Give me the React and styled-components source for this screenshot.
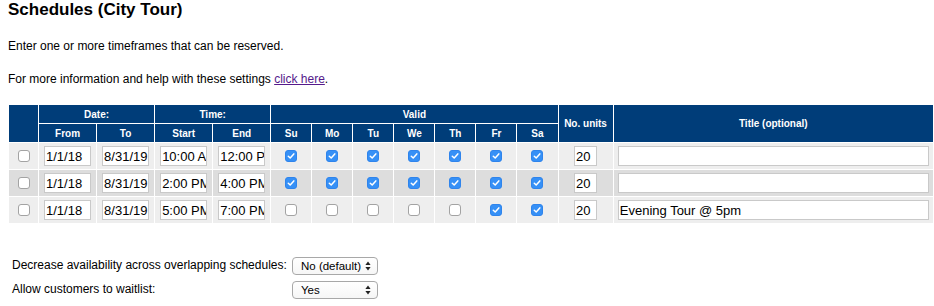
import React from "react";
import styled, { createGlobalStyle } from "styled-components";

const GlobalStyle = createGlobalStyle`
  body {
    margin: 0;
    background: #fff;
    color: #000;
    font-family: "Liberation Sans", Arial, Helvetica, sans-serif;
  }
`;

const Page = styled.div`
  padding: 0 0 0 8px;
`;

const Heading = styled.h2`
  margin: 0;
  font-size: 17px;
  line-height: 20px;
  font-weight: bold;
`;

const Note = styled.p`
  margin: 19px 0 0;
  font-size: 12px;
  line-height: 14px;
`;

const HelpLink = styled.a`
  color: #551a8b;
  text-decoration: underline;
`;

const ScheduleTable = styled.table`
  margin-top: 18px;
  border-collapse: separate;
  border-spacing: 1px;
  table-layout: fixed;
  width: 926px;
  background: #fff;
`;

const HeadCell = styled.th`
  background: #003d79;
  color: #fff;
  font-size: 10px;
  font-weight: bold;
  height: 18px;
  padding: 0;
  text-align: center;
  vertical-align: middle;
`;

const Row = styled.tr`
  background: ${(p) => (p.$alt ? "#dddddd" : "#eeeeee")};
`;

const Cell = styled.td`
  height: 26px;
  padding: 0;
  text-align: center;
  vertical-align: middle;
  font-size: 0;
`;

const TextBox = styled.input`
  box-sizing: border-box;
  width: ${(p) => p.$w}px;
  height: 20px;
  margin: 0;
  padding: 0 0 0 1px;
  border: 1px solid #c9c9c9;
  background: #fff;
  font-family: "Liberation Sans", Arial, Helvetica, sans-serif;
  font-size: 13px;
  color: #000;
  vertical-align: middle;
  outline: none;
`;

const CheckBox = styled.span`
  display: inline-block;
  box-sizing: border-box;
  width: 12px;
  height: 12px;
  border-radius: 3px;
  border: 1px solid ${(p) => (p.$checked ? "#2f84ec" : "#a3a3a3")};
  background: ${(p) => (p.$checked ? "#3690f6" : "#fff")};
  vertical-align: middle;
  position: relative;

  svg {
    position: absolute;
    left: 0;
    top: 0;
  }
`;

const Settings = styled.div`
  margin-top: 33px;
  padding-left: 4px;
  display: grid;
  grid-template-columns: 280px auto;
  row-gap: 6px;
  align-items: center;
  justify-content: start;
`;

const SettingLabel = styled.span`
  font-size: 12px;
  line-height: 14px;
  margin-bottom: 3px;
`;

const SelectFrame = styled.span`
  display: inline-flex;
  align-items: center;
  box-sizing: border-box;
  width: 86px;
  height: 18px;
  border: 1px solid #a8a8a8;
  border-radius: 4px;
  background: linear-gradient(#ffffff, #f6f6f6);
  padding-right: 6px;

  select {
    appearance: none;
    flex: 1;
    min-width: 0;
    border: none;
    background: transparent;
    font-family: "Liberation Sans", Arial, Helvetica, sans-serif;
    font-size: 11.5px;
    color: #000;
    padding: 0 0 0 8px;
    margin: 0;
    outline: none;
  }
`;

const Check = ({ checked }) => (
  <CheckBox $checked={checked}>
    {checked && (
      <svg width="10" height="10" viewBox="0 0 10 10">
        <path
          d="M2.3 5.2 L4.2 7 L7.8 2.9"
          fill="none"
          stroke="#fff"
          strokeWidth="1.5"
          strokeLinecap="round"
          strokeLinejoin="round"
        />
      </svg>
    )}
  </CheckBox>
);

const Select = ({ value, options }) => (
  <SelectFrame>
    <select defaultValue={value}>
      {options.map((o) => (
        <option key={o}>{o}</option>
      ))}
    </select>
    <svg width="6" height="10" viewBox="0 0 6 10">
      <path d="M3 0.5 L5.6 4 L0.4 4 Z" fill="#222" />
      <path d="M3 9.5 L5.6 6 L0.4 6 Z" fill="#222" />
    </svg>
  </SelectFrame>
);

const days = ["Su", "Mo", "Tu", "We", "Th", "Fr", "Sa"];
const colWidths = [29, 57, 57, 57, 57, 40, 40, 40, 40, 40, 40, 40, 54, 319];

const schedules = [
  { from: "1/1/18", to: "8/31/19", start: "10:00 AM", end: "12:00 PM", days: [1, 1, 1, 1, 1, 1, 1], units: "20", title: "" },
  { from: "1/1/18", to: "8/31/19", start: "2:00 PM", end: "4:00 PM", days: [1, 1, 1, 1, 1, 1, 1], units: "20", title: "" },
  { from: "1/1/18", to: "8/31/19", start: "5:00 PM", end: "7:00 PM", days: [0, 0, 0, 0, 0, 1, 1], units: "20", title: "Evening Tour @ 5pm" },
];

export default function App() {
  return (
    <Page>
      <GlobalStyle />
      <Heading>Schedules (City Tour)</Heading>
      <Note>Enter one or more timeframes that can be reserved.</Note>
      <Note>
        For more information and help with these settings{" "}
        <HelpLink href="#help">click here</HelpLink>.
      </Note>

      <ScheduleTable>
        <colgroup>
          {colWidths.map((w, i) => (
            <col key={i} style={{ width: w }} />
          ))}
        </colgroup>
        <thead>
          <tr>
            <HeadCell rowSpan={2}></HeadCell>
            <HeadCell colSpan={2}>Date:</HeadCell>
            <HeadCell colSpan={2}>Time:</HeadCell>
            <HeadCell colSpan={7}>Valid</HeadCell>
            <HeadCell rowSpan={2}>No. units</HeadCell>
            <HeadCell rowSpan={2}>Title (optional)</HeadCell>
          </tr>
          <tr>
            <HeadCell>From</HeadCell>
            <HeadCell>To</HeadCell>
            <HeadCell>Start</HeadCell>
            <HeadCell>End</HeadCell>
            {days.map((d) => (
              <HeadCell key={d}>{d}</HeadCell>
            ))}
          </tr>
        </thead>
        <tbody>
          {schedules.map((s, i) => (
            <Row key={i} $alt={i % 2 === 1}>
              <Cell>
                <Check checked={false} />
              </Cell>
              <Cell>
                <TextBox $w={47} defaultValue={s.from} />
              </Cell>
              <Cell>
                <TextBox $w={47} defaultValue={s.to} />
              </Cell>
              <Cell>
                <TextBox $w={47} defaultValue={s.start} />
              </Cell>
              <Cell>
                <TextBox $w={47} defaultValue={s.end} />
              </Cell>
              {s.days.map((on, d) => (
                <Cell key={d}>
                  <Check checked={!!on} />
                </Cell>
              ))}
              <Cell>
                <TextBox $w={23} defaultValue={s.units} />
              </Cell>
              <Cell>
                <TextBox $w={311} defaultValue={s.title} />
              </Cell>
            </Row>
          ))}
        </tbody>
      </ScheduleTable>

      <Settings>
        <SettingLabel>Decrease availability across overlapping schedules:</SettingLabel>
        <Select value="No (default)" options={["No (default)", "Yes"]} />
        <SettingLabel>Allow customers to waitlist:</SettingLabel>
        <Select value="Yes" options={["Yes", "No"]} />
      </Settings>
    </Page>
  );
}
